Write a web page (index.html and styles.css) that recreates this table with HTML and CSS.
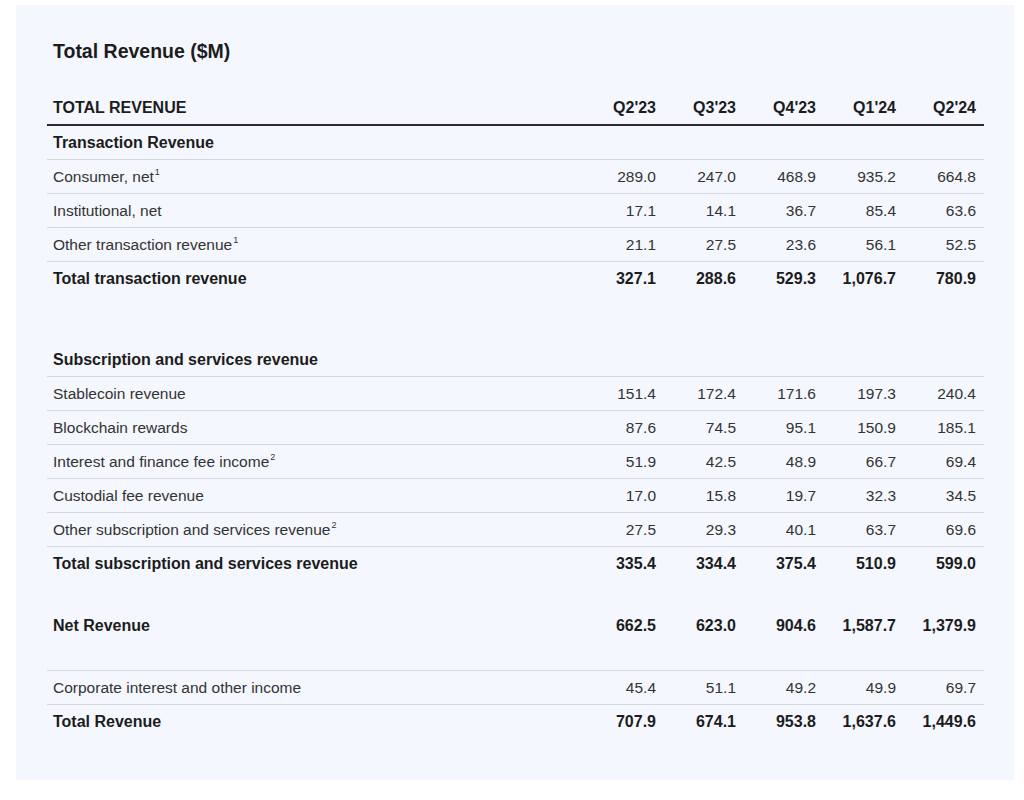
FILE: index.html
```html
<!DOCTYPE html>
<html lang="en">
<head>
<meta charset="utf-8">
<title>Total Revenue ($M)</title>
<link rel="stylesheet" href="styles.css">
</head>
<body>
<div class="card">
  <h1 class="title">Total Revenue ($M)</h1>
  <div class="table">
    <div class="row head">
      <div class="label">TOTAL REVENUE</div>
      <div class="num">Q2'23</div><div class="num">Q3'23</div><div class="num">Q4'23</div><div class="num">Q1'24</div><div class="num">Q2'24</div>
    </div>
    <div class="row bold line"><div class="label">Transaction Revenue</div></div>
    <div class="row line"><div class="label">Consumer, net<sup>1</sup></div><div class="num">289.0</div><div class="num">247.0</div><div class="num">468.9</div><div class="num">935.2</div><div class="num">664.8</div></div>
    <div class="row line"><div class="label">Institutional, net</div><div class="num">17.1</div><div class="num">14.1</div><div class="num">36.7</div><div class="num">85.4</div><div class="num">63.6</div></div>
    <div class="row line"><div class="label">Other transaction revenue<sup>1</sup></div><div class="num">21.1</div><div class="num">27.5</div><div class="num">23.6</div><div class="num">56.1</div><div class="num">52.5</div></div>
    <div class="row bold"><div class="label">Total transaction revenue</div><div class="num">327.1</div><div class="num">288.6</div><div class="num">529.3</div><div class="num">1,076.7</div><div class="num">780.9</div></div>
    <div class="spacer"></div>
    <div class="row bold line"><div class="label">Subscription and services revenue</div></div>
    <div class="row line"><div class="label">Stablecoin revenue</div><div class="num">151.4</div><div class="num">172.4</div><div class="num">171.6</div><div class="num">197.3</div><div class="num">240.4</div></div>
    <div class="row line"><div class="label">Blockchain rewards</div><div class="num">87.6</div><div class="num">74.5</div><div class="num">95.1</div><div class="num">150.9</div><div class="num">185.1</div></div>
    <div class="row line"><div class="label">Interest and finance fee income<sup>2</sup></div><div class="num">51.9</div><div class="num">42.5</div><div class="num">48.9</div><div class="num">66.7</div><div class="num">69.4</div></div>
    <div class="row line"><div class="label">Custodial fee revenue</div><div class="num">17.0</div><div class="num">15.8</div><div class="num">19.7</div><div class="num">32.3</div><div class="num">34.5</div></div>
    <div class="row line"><div class="label">Other subscription and services revenue<sup>2</sup></div><div class="num">27.5</div><div class="num">29.3</div><div class="num">40.1</div><div class="num">63.7</div><div class="num">69.6</div></div>
    <div class="row bold"><div class="label">Total subscription and services revenue</div><div class="num">335.4</div><div class="num">334.4</div><div class="num">375.4</div><div class="num">510.9</div><div class="num">599.0</div></div>
    <div class="row bold line tall"><div class="label">Net Revenue</div><div class="num">662.5</div><div class="num">623.0</div><div class="num">904.6</div><div class="num">1,587.7</div><div class="num">1,379.9</div></div>
    <div class="row line"><div class="label">Corporate interest and other income</div><div class="num">45.4</div><div class="num">51.1</div><div class="num">49.2</div><div class="num">49.9</div><div class="num">69.7</div></div>
    <div class="row bold"><div class="label">Total Revenue</div><div class="num">707.9</div><div class="num">674.1</div><div class="num">953.8</div><div class="num">1,637.6</div><div class="num">1,449.6</div></div>
  </div>
</div>
</body>
</html>
```

FILE: styles.css
```css
html, body {
  margin: 0;
  padding: 0;
  background: #ffffff;
}

body {
  font-family: "Liberation Sans", Arial, sans-serif;
  color: #333333;
}

.card {
  box-sizing: border-box;
  width: 998px;
  height: 775px;
  margin: 5px 0 0 16px;
  padding: 35px 30px 0 31px;
  background: #f4f7fd;
}

.title {
  margin: 0 0 30px 6px;
  font-size: 19.5px;
  line-height: 22px;
  font-weight: 700;
  color: #1c1c1c;
}

.table {
  width: 937px;
}

.row {
  box-sizing: border-box;
  display: grid;
  grid-template-columns: 1fr repeat(5, 80px);
  align-items: center;
  height: 34px;
  font-size: 15.5px;
  line-height: 18px;
}

.row.line {
  border-bottom: 1px solid #d4d8df;
}

.row.head {
  border-bottom: 2px solid #2b2b2b;
  font-weight: 700;
  font-size: 16px;
  color: #1c1c1c;
}

.row.bold {
  font-weight: 700;
  font-size: 16px;
  color: #1c1c1c;
}

.row.tall {
  height: 90px;
}

.label {
  padding-left: 6px;
}

.num {
  text-align: right;
  padding-right: 8px;
}

sup {
  font-size: 9px;
  line-height: 0;
  vertical-align: 7px;
  margin-left: 1px;
}

.spacer {
  height: 47px;
}
```
